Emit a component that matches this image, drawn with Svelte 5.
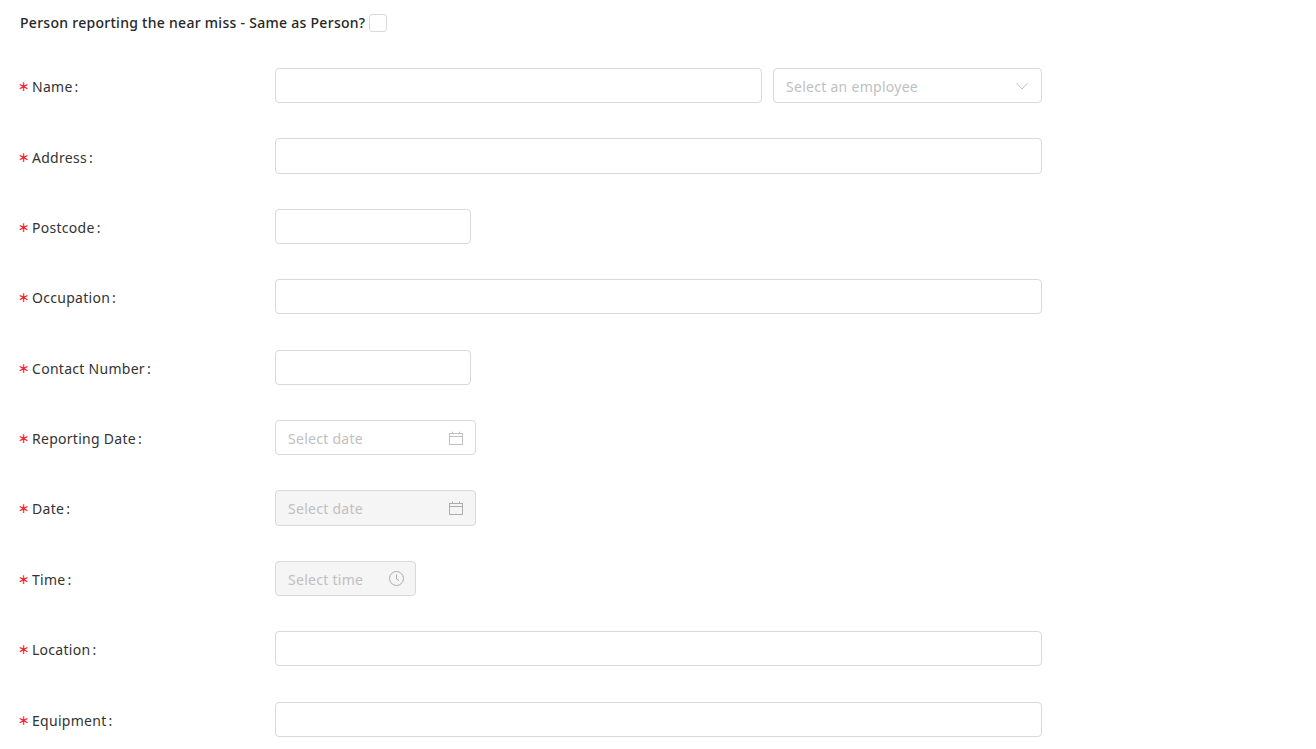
<script>
  const rows = [
    { label: 'Name', kind: 'name' },
    { label: 'Address', kind: 'full' },
    { label: 'Postcode', kind: 'short' },
    { label: 'Occupation', kind: 'full' },
    { label: 'Contact Number', kind: 'short' },
    { label: 'Reporting Date', kind: 'date' },
    { label: 'Date', kind: 'date', disabled: true },
    { label: 'Time', kind: 'time', disabled: true },
    { label: 'Location', kind: 'full' },
    { label: 'Equipment', kind: 'full' }
  ];
</script>

<div class="page">
  <div class="heading">
    <span>Person reporting the near miss - Same as Person?</span>
    <input class="check" type="checkbox" />
  </div>

  <form class="form">
    {#each rows as row}
      <div class="row">
        <label class="label"><span class="star">∗</span>{row.label}<span class="colon">:</span></label>

        {#if row.kind === 'name'}
          <div class="name-group">
            <input class="input grow" type="text" />
            <div class="picker select">
              <span class="placeholder">Select an employee</span>
              <svg width="14" height="14" viewBox="0 0 14 14" fill="none" stroke="#bfbfbf" stroke-width="1">
                <path d="M1.5 4 L7 10 L12.5 4" />
              </svg>
            </div>
          </div>
        {:else if row.kind === 'full'}
          <input class="input full" type="text" />
        {:else if row.kind === 'short'}
          <input class="input short" type="text" />
        {:else if row.kind === 'date'}
          <div class="picker date" class:disabled={row.disabled}>
            <span class="placeholder">Select date</span>
            <svg width="14" height="14" viewBox="0 0 14 14" fill="none" stroke="currentColor" stroke-width="1">
              <rect x="0.5" y="2.5" width="13" height="11" />
              <path d="M0.5 5.5 H13.5 M3.5 0.5 V3 M10.5 0.5 V3" />
            </svg>
          </div>
        {:else}
          <div class="picker time" class:disabled={row.disabled}>
            <span class="placeholder">Select time</span>
            <svg class="clock" width="15" height="15" viewBox="0 0 15 15" fill="none" stroke="currentColor" stroke-width="1">
              <circle cx="7.5" cy="7.5" r="7" />
              <path d="M7.5 3.5 V8 L10 9.5" />
            </svg>
          </div>
        {/if}
      </div>
    {/each}
  </form>
</div>

<style>
  :global(body) {
    margin: 0;
    background: #fff;
    font-family: "Noto Sans", "Open Sans", sans-serif;
  }

  .page {
    padding: 12px 20px 0;
    height: 737px;
    overflow: hidden;
    font-size: 14px;
    letter-spacing: 0.28px;
    color: #333;
  }

  .heading {
    display: flex;
    align-items: center;
    gap: 4px;
    height: 20px;
    margin-bottom: 36px;
    font-weight: 500;
    color: #262626;
  }

  .check {
    appearance: none;
    width: 18px;
    height: 18px;
    margin: 2px 0 0;
    border: 1px solid #d9d9d9;
    border-radius: 3px;
    background: #fff;
  }

  .form {
    display: flex;
    flex-direction: column;
    gap: 35.15px;
  }

  .row {
    display: flex;
    align-items: center;
    height: 35.25px;
  }

  .label {
    width: 255px;
    flex-shrink: 0;
    padding-top: 2px;
    color: #333;
  }

  .star {
    display: inline-block;
    width: 14px;
    margin-left: -2px;
    color: #f5222d;
    font-family: "DejaVu Sans", sans-serif;
    font-size: 14px;
    line-height: 1;
    letter-spacing: 0;
    transform: translateY(-1px);
  }

  .colon {
    margin-left: 2px;
    margin-right: 8px;
  }

  .input,
  .picker {
    box-sizing: border-box;
    height: 100%;
    border: 1px solid #d9d9d9;
    border-radius: 4px;
    background: #fff;
    font: inherit;
  }

  .input {
    padding: 4px 12px;
    outline: none;
  }

  .full {
    width: 767px;
  }

  .short {
    width: 196px;
  }

  .name-group {
    display: flex;
    gap: 11px;
    width: 767px;
    height: 100%;
  }

  .grow {
    flex: 1;
    min-width: 0;
  }

  .picker {
    display: flex;
    align-items: center;
    justify-content: space-between;
    padding: 0 12px;
    color: #bfbfbf;
  }

  .select {
    width: 269px;
  }

  .date {
    width: 201px;
  }

  .time {
    width: 141px;
  }

  .clock {
    margin-right: -1px;
  }

  .disabled {
    background: #f5f5f5;
    color: #adadad;
  }

  .placeholder {
    position: relative;
    top: 1px;
    color: #bfbfbf;
  }
</style>
